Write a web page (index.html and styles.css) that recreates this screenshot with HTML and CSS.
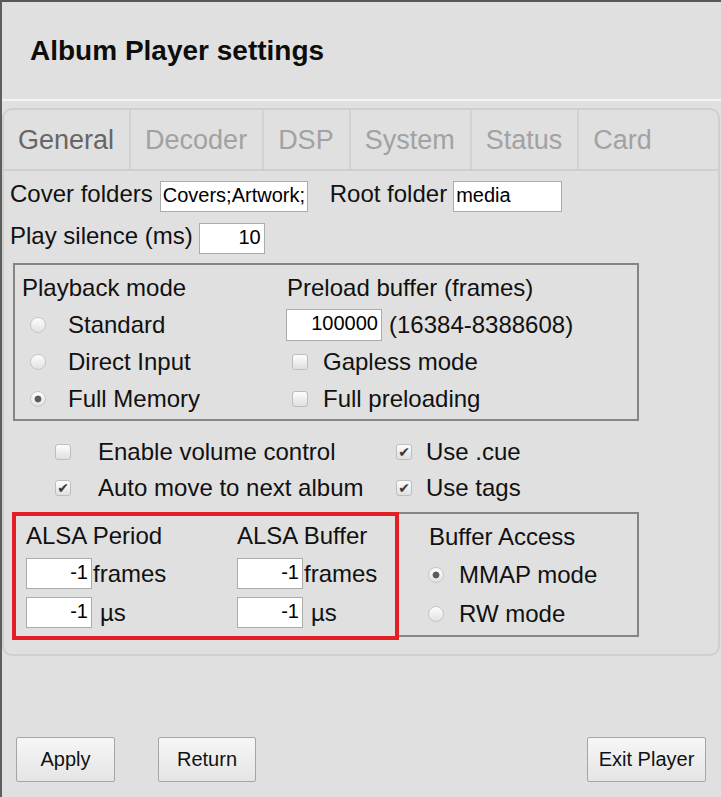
FILE: index.html
```html
<!DOCTYPE html>
<html lang="en">
<head>
<meta charset="utf-8">
<title>Album Player settings</title>
<link rel="stylesheet" href="styles.css">
</head>
<body>
<div class="app">
  <header class="head"><h1 class="title">Album Player settings</h1></header>
  <section class="panel">
    <nav class="tabs">
      <div class="tab active">General</div>
      <div class="tab">Decoder</div>
      <div class="tab">DSP</div>
      <div class="tab">System</div>
      <div class="tab">Status</div>
      <div class="tab last">Card</div>
    </nav>
    <div class="content">
      <div class="row row1">
        <span class="lbl">Cover folders</span><input class="txt w-cover" value="Covers;Artwork;">
        <span class="lbl root">Root folder</span><input class="txt w-root" value="media">
      </div>
      <div class="row row2">
        <span class="lbl">Play silence (ms)</span><input class="txt num w-sil" value="10">
      </div>
      <div class="box playback">
        <div class="col">
          <div class="line">Playback mode</div>
          <div class="line"><input type="radio" name="pm" class="rd"><span>Standard</span></div>
          <div class="line"><input type="radio" name="pm" class="rd"><span>Direct Input</span></div>
          <div class="line"><input type="radio" name="pm" class="rd" checked><span>Full Memory</span></div>
        </div>
        <div class="col">
          <div class="line">Preload buffer (frames)</div>
          <div class="line"><input class="txt num w-pre" value="100000"><span class="range">(16384-8388608)</span></div>
          <div class="line"><input type="checkbox" class="cb cb-pl"><span>Gapless mode</span></div>
          <div class="line"><input type="checkbox" class="cb cb-pl"><span>Full preloading</span></div>
        </div>
      </div>
      <div class="opts">
        <div class="opt"><input type="checkbox" class="cb cb-l"><span>Enable volume control</span></div>
        <div class="opt"><input type="checkbox" class="cb cb-r" checked><span>Use .cue</span></div>
        <div class="opt"><input type="checkbox" class="cb cb-l" checked><span>Auto move to next album</span></div>
        <div class="opt"><input type="checkbox" class="cb cb-r" checked><span>Use tags</span></div>
      </div>
      <div class="alsa">
        <div class="hl">
          <div class="col">
            <div class="l-h">ALSA Period</div>
            <div class="l-i"><input class="txt num w-alsa" value="-1"><span class="unit-f">frames</span></div>
            <div class="l-i"><input class="txt num w-alsa" value="-1"><span class="unit-u">µs</span></div>
          </div>
          <div class="col">
            <div class="l-h">ALSA Buffer</div>
            <div class="l-i"><input class="txt num w-alsa" value="-1"><span class="unit-f">frames</span></div>
            <div class="l-i"><input class="txt num w-alsa" value="-1"><span class="unit-u">µs</span></div>
          </div>
        </div>
        <div class="access">
          <div class="l-h">Buffer Access</div>
          <div class="l-i"><input type="radio" name="ba" class="rd rd-a" checked><span>MMAP mode</span></div>
          <div class="l-i"><input type="radio" name="ba" class="rd rd-a"><span>RW mode</span></div>
        </div>
      </div>
    </div>
  </section>
  <footer class="actions">
    <button class="btn b-apply">Apply</button>
    <button class="btn b-return">Return</button>
    <button class="btn b-exit">Exit Player</button>
  </footer>
</div>
</body>
</html>
```

FILE: styles.css
```css
* { box-sizing: border-box; }
html, body { margin: 0; }
body {
  background: #e0e0e0;
  font-family: "Liberation Sans", Arial, sans-serif;
  color: #111;
}
.app {
  min-height: 797px;
  border-top: 2px solid #585858;
  border-left: 2px solid #5e5e5e;
  display: flex;
  flex-direction: column;
}
.head {
  height: 99px;
  display: flex;
  align-items: center;
  padding-left: 28px;
  border-bottom: 2px solid #f3f3f3;
}
.title {
  margin: 0;
  font-size: 28px;
  line-height: 32px;
  font-weight: bold;
  color: #0d0d0d;
}
.panel {
  margin: 7px 1px 0 0;
  border: 2px solid #cfcfcf;
  border-radius: 10px;
}
.tabs {
  display: flex;
  height: 61px;
  border-bottom: 2px solid #cfcfcf;
}
.tab {
  display: flex;
  align-items: center;
  padding: 0 15px 0 14px;
  font-size: 27px;
  line-height: 30px;
  color: #a2a2a2;
  border-right: 2px solid #d2d2d2;
}
.tab.active { color: #666; }
.tab.last { border-right: 0; }

.content {
  padding: 9px 0 14px 6px;
  font-size: 24px;
  line-height: 28px;
}
.row { display: flex; align-items: baseline; }
.row1 { height: 42px; }
.row2 { height: 41px; }
.root { margin-left: 22px; }

.txt {
  font: 20px "Liberation Sans", Arial, sans-serif;
  color: #000;
  height: 31px;
  border: 1px solid #acacac;
  background: #fff;
  padding: 0 3px 2px;
  margin: 0;
  border-radius: 0;
  outline: none;
}
.num { text-align: right; }
.w-cover { width: 148px; margin-left: 7px; padding-left: 2px; }
.w-root { width: 109px; margin-left: 6px; padding-left: 2px; }
.w-sil { width: 66px; margin-left: 6px; }
.w-pre { width: 96px; height: 32px; margin-left: -1px; }
.w-alsa { width: 66px; }

.box {
  margin-left: 3px;
  width: 626px;
  border: 2px solid #858585;
  padding: 4px 0 2px 7px;
  display: grid;
  grid-template-columns: 265px 1fr;
}
.line {
  height: 37px;
  display: flex;
  align-items: center;
  white-space: nowrap;
}
.range { margin-left: 7px; }

.rd {
  appearance: none;
  -webkit-appearance: none;
  width: 16px;
  height: 16px;
  margin: 0 22px 0 8px;
  border-radius: 50%;
  border: 1px solid #c6c6c6;
  background: linear-gradient(#fdfdfd, #e2e2e2);
  flex: none;
}
.rd:checked {
  background: radial-gradient(circle, #5c5c5c 0 3px, rgba(92,92,92,0) 3.8px), linear-gradient(#fdfdfd, #e2e2e2);
}
.rd-a { margin: 0 15px 0 -1px; }

.cb {
  appearance: none;
  -webkit-appearance: none;
  width: 16px;
  height: 16px;
  margin: 0;
  border: 1px solid #bdbdbd;
  border-radius: 3px;
  background: linear-gradient(#fdfdfd, #e0e0e0);
  flex: none;
}
.cb:checked::after {
  content: "\2714";
  display: block;
  text-align: center;
  font-family: "DejaVu Sans", sans-serif;
  font-size: 14px;
  line-height: 14px;
  color: #383838;
}
.cb-pl { margin: 0 15px 0 5px; }
.cb-l { margin-right: 27px; }
.cb-r { margin-right: 14px; }

.opts {
  margin-top: 13px;
  padding-left: 45px;
  display: grid;
  grid-template-columns: 341px auto;
  grid-auto-rows: 36px;
}
.opt { display: flex; align-items: center; white-space: nowrap; }

.alsa {
  margin-top: 6px;
  margin-left: 2px;
  display: flex;
  align-items: flex-start;
}
.hl {
  width: 387px;
  border: 4px solid #e31e24;
  padding: 2px 0 4px 10px;
  display: grid;
  grid-template-columns: 211px auto;
}
.access {
  width: 240px;
  border: 2px solid #858585;
  border-left: 0;
  padding: 5px 0 2px 30px;
}
.l-h { height: 36px; display: flex; align-items: center; white-space: nowrap; }
.l-i { height: 39px; display: flex; align-items: center; white-space: nowrap; }
.unit-f { margin-left: 1px; }
.unit-u { margin-left: 8px; }

.actions {
  margin-top: 81px;
  display: flex;
  padding: 0 15px 0 14px;
}
.btn {
  height: 45px;
  font: 20px "Liberation Sans", Arial, sans-serif;
  color: #111;
  border: 1px solid #a5a5a5;
  border-radius: 2px;
  background: linear-gradient(#f6f6f6, #e5e5e5);
  padding: 0;
}
.b-apply { width: 99px; }
.b-return { width: 98px; margin-left: 43px; }
.b-exit { width: 119px; margin-left: auto; }
```
